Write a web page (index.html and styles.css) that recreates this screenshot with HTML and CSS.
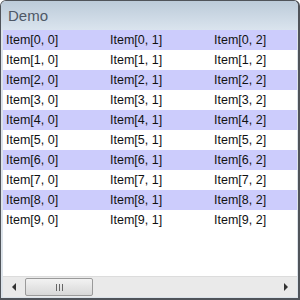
FILE: index.html
```html
<!DOCTYPE html>
<html lang="en">

<head>
    <meta charset="UTF-8" />
    <title>Demo</title>
    <link rel="stylesheet" href="styles.css">
</head>

<body>
    <div class="window">
        <div class="title-bar">Demo</div>
        <div class="frame">
            <div class="list">
                <div class="row odd"><span>Item[0, 0]</span><span>Item[0, 1]</span><span>Item[0, 2]</span></div>
                <div class="row"><span>Item[1, 0]</span><span>Item[1, 1]</span><span>Item[1, 2]</span></div>
                <div class="row odd"><span>Item[2, 0]</span><span>Item[2, 1]</span><span>Item[2, 2]</span></div>
                <div class="row"><span>Item[3, 0]</span><span>Item[3, 1]</span><span>Item[3, 2]</span></div>
                <div class="row odd"><span>Item[4, 0]</span><span>Item[4, 1]</span><span>Item[4, 2]</span></div>
                <div class="row"><span>Item[5, 0]</span><span>Item[5, 1]</span><span>Item[5, 2]</span></div>
                <div class="row odd"><span>Item[6, 0]</span><span>Item[6, 1]</span><span>Item[6, 2]</span></div>
                <div class="row"><span>Item[7, 0]</span><span>Item[7, 1]</span><span>Item[7, 2]</span></div>
                <div class="row odd"><span>Item[8, 0]</span><span>Item[8, 1]</span><span>Item[8, 2]</span></div>
                <div class="row"><span>Item[9, 0]</span><span>Item[9, 1]</span><span>Item[9, 2]</span></div>
            </div>
            <div class="scrollbar">
                <div class="arrow left"></div>
                <div class="track">
                    <div class="thumb"><i></i><i></i><i></i></div>
                </div>
                <div class="arrow right"></div>
            </div>
        </div>
    </div>
</body>

</html>
```

FILE: styles.css
```css
body {
    margin: 0;
    font-family: "Liberation Sans", Arial, sans-serif;
}

.window {
    width: 300px;
    height: 300px;
    box-sizing: border-box;
    display: flex;
    flex-direction: column;
    background: #dce3ea;
    border: 1px solid #50545a;
    border-right-width: 2px;
    border-bottom-width: 2px;
    border-radius: 6px 6px 0 0;
    overflow: hidden;
}

.title-bar {
    height: 29px;
    padding-left: 7px;
    display: flex;
    align-items: center;
    font-size: 15px;
    color: #4e5866;
    background: linear-gradient(#bccbd9, #dae4ee);
}

.frame {
    flex: 1;
    display: flex;
    flex-direction: column;
    margin: 0 1px 1px 2px;
    background: white;
}

.list {
    flex: 1;
}

.row {
    display: grid;
    grid-template-columns: 104px 104px 1fr;
    height: 20px;
    align-items: center;
    padding-left: 3px;
    font-size: 12.5px;
    color: #111;
}

.row.odd {
    background: #ccccfc;
}

.scrollbar {
    height: 20px;
    display: flex;
    align-items: center;
    background: #eaeaea;
    border-top: 1px solid #dcdcdc;
}

.arrow {
    width: 22px;
    display: flex;
    justify-content: center;
}

.arrow.left::before {
    content: "";
    border: 4px solid transparent;
    border-right: 4px solid #333;
    border-left: 0;
}

.arrow.right::before {
    content: "";
    border: 4px solid transparent;
    border-left: 4px solid #333;
    border-right: 0;
}

.track {
    flex: 1;
    align-self: stretch;
    padding: 1px 0;
}

.thumb {
    width: 68px;
    height: 100%;
    box-sizing: border-box;
    border: 1px solid #9a9a9a;
    border-radius: 2px;
    background: linear-gradient(#f2f2f2, #d8d8d8);
    display: flex;
    justify-content: center;
    align-items: center;
    gap: 2px;
}

.thumb i {
    width: 1px;
    height: 7px;
    background: #666;
}
```
